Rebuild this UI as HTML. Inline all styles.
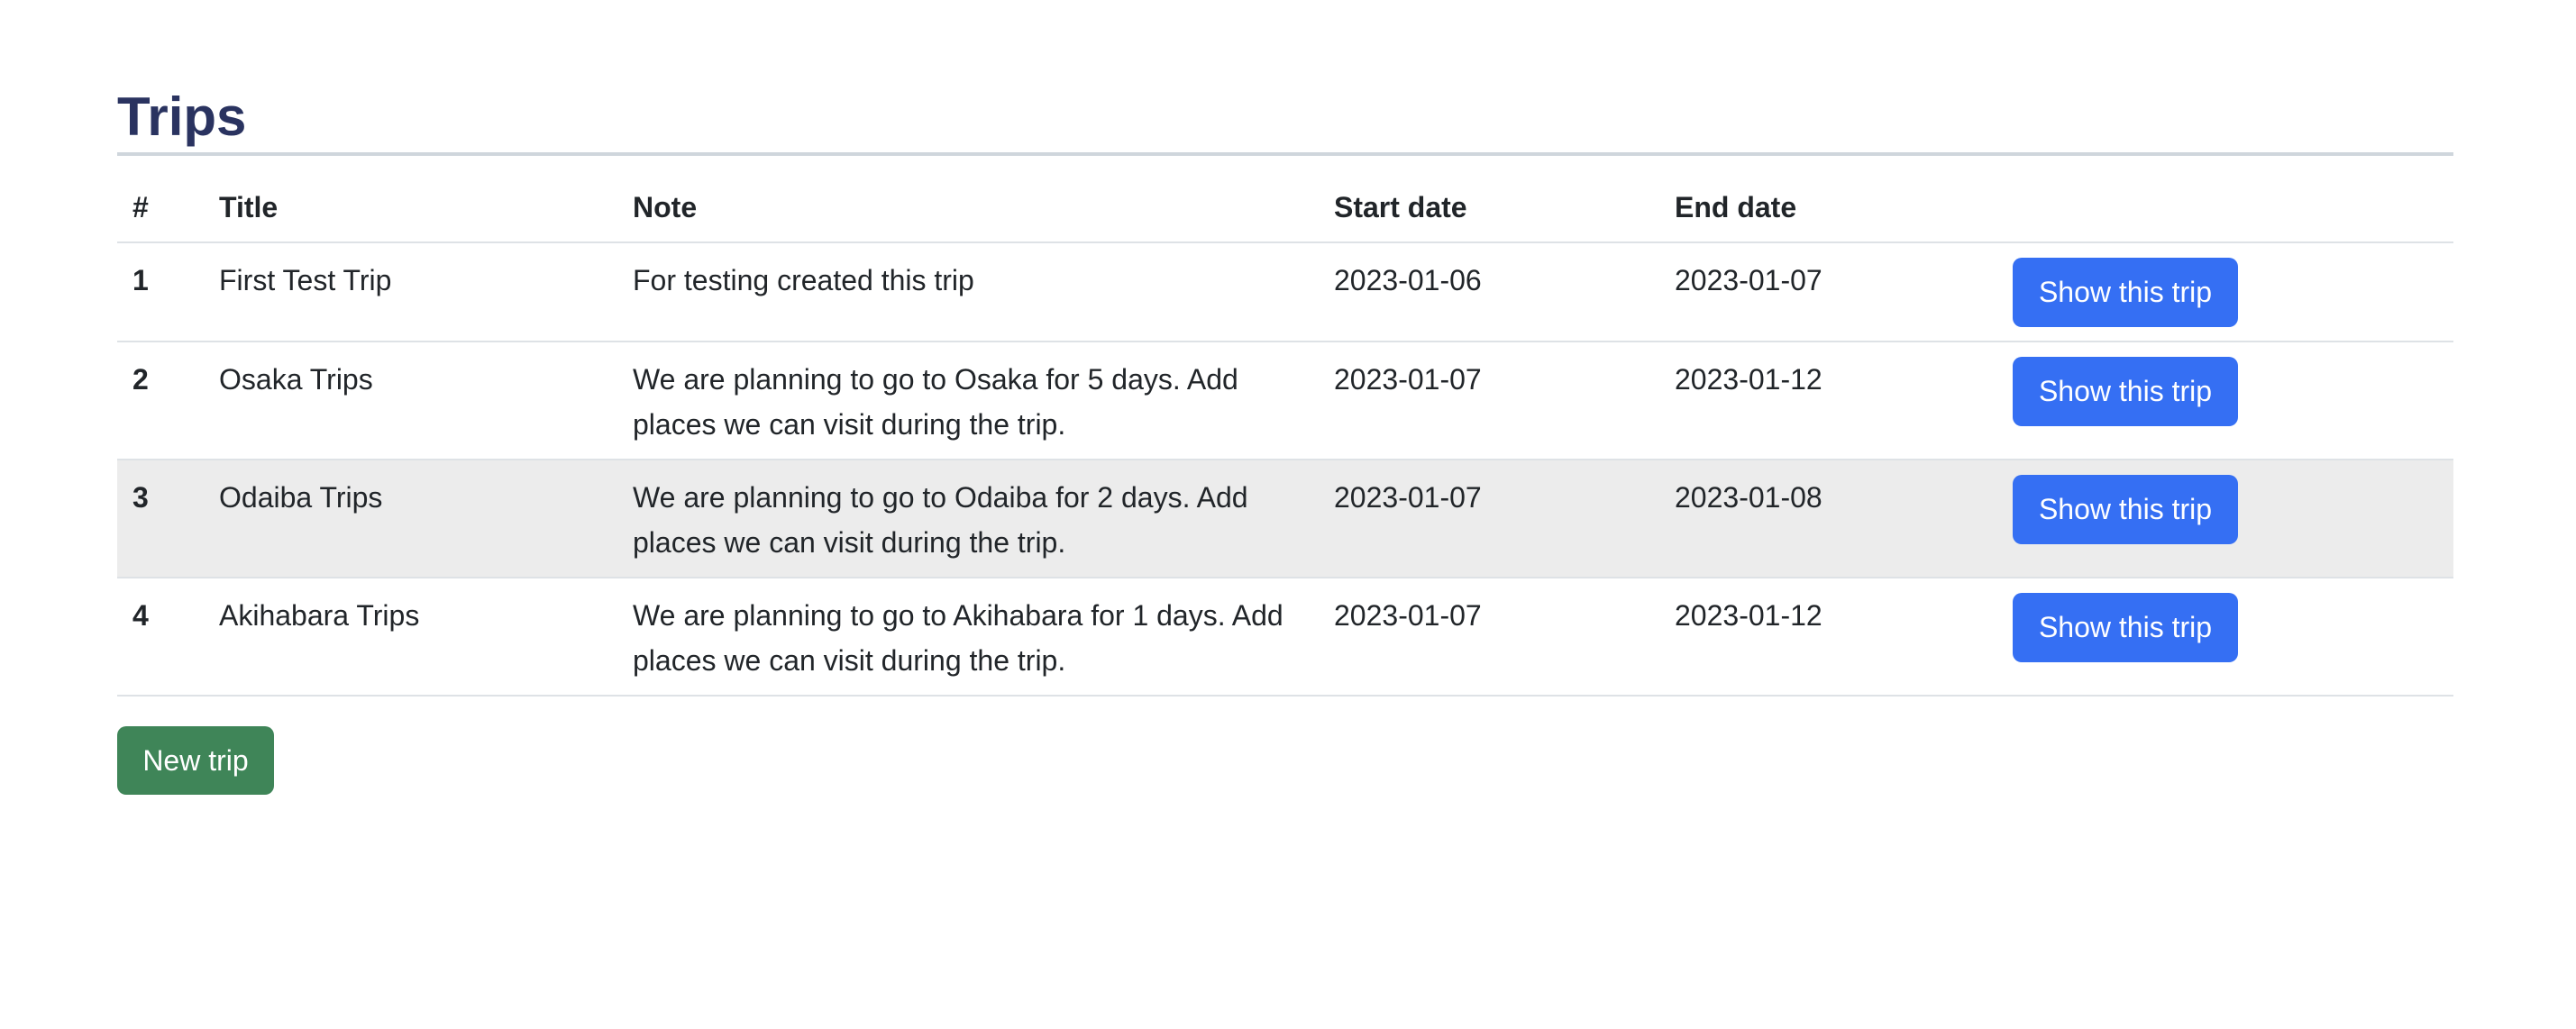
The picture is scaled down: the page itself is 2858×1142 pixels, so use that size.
<!DOCTYPE html>
<html><head><meta charset="utf-8"><style>
body{margin:0;background:#fff;width:2858px;height:1142px;font-family:"Liberation Sans",Arial,sans-serif;color:#212529;position:relative;overflow:hidden}
h1{position:absolute;left:130px;top:90px;margin:0;font-size:60px;line-height:80px;color:#2a3360;font-weight:bold}
.rule{position:absolute;left:130px;top:169px;width:2592px;height:4px;background:#cfd6dc}
table{position:absolute;left:130px;top:189px;width:2592px;border-collapse:collapse;font-size:32px;line-height:50px}
th,td{text-align:left;vertical-align:top;padding:16px 17px 13px;border-bottom:2px solid #dee2e6}
th{font-weight:bold}
tr.b td{padding-bottom:15px}
tr.g td{background:#ececec}
.btn{display:inline-block;vertical-align:top;width:250px;height:77px;line-height:77px;text-align:center;color:#fff;background:#356ff3;border-radius:10px;font-size:32px}
.new{position:absolute;left:130px;top:806px;width:174px;height:76px;line-height:76px;text-align:center;color:#fff;background:#3f8558;border-radius:10px;font-size:32px}
</style></head><body>
<h1>Trips</h1>
<div class="rule"></div>
<table>
<colgroup><col style="width:96px"><col style="width:459px"><col style="width:778px"><col style="width:378px"><col style="width:375px"><col></colgroup>
<tr><th>#</th><th>Title</th><th>Note</th><th>Start date</th><th>End date</th><th></th></tr>
<tr class="b"><td><b>1</b></td><td>First Test Trip</td><td>For testing created this trip</td><td>2023-01-06</td><td>2023-01-07</td><td><span class="btn">Show this trip</span></td></tr>
<tr><td><b>2</b></td><td>Osaka Trips</td><td>We are planning to go to Osaka for 5 days. Add places we can visit during the trip.</td><td>2023-01-07</td><td>2023-01-12</td><td><span class="btn">Show this trip</span></td></tr>
<tr class="g"><td><b>3</b></td><td>Odaiba Trips</td><td>We are planning to go to Odaiba for 2 days. Add places we can visit during the trip.</td><td>2023-01-07</td><td>2023-01-08</td><td><span class="btn">Show this trip</span></td></tr>
<tr><td><b>4</b></td><td>Akihabara Trips</td><td>We are planning to go to Akihabara for 1 days. Add places we can visit during the trip.</td><td>2023-01-07</td><td>2023-01-12</td><td><span class="btn">Show this trip</span></td></tr>
</table>
<div class="new">New trip</div>
</body></html>
